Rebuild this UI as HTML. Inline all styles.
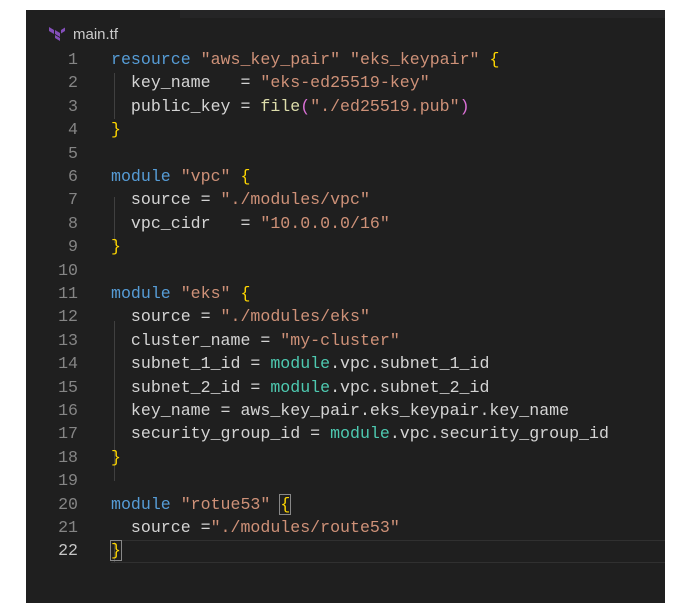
<!DOCTYPE html><html><head><style>
body{margin:0;background:#fff;width:680px;height:611px;position:relative;overflow:hidden}
#p{position:absolute;left:26px;top:10px;width:639px;height:593px;background:#1f1f1f}
#strip{position:absolute;left:154px;top:0;width:485px;height:8px;background:#252526}
#tab{position:absolute;left:47px;top:16px;color:#ccc;font:15px "Liberation Sans",sans-serif}
#code{position:absolute;left:0;top:3px;width:639px;height:580px}
.l{position:absolute;left:0;height:23px;line-height:23px;font:16.6px "Liberation Mono",monospace;white-space:pre;color:#d4d4d4}
.n{position:absolute;left:0;width:52px;text-align:right;color:#858585}
.c{position:absolute;left:85px}
.k{color:#569cd6}.s{color:#ce9178}.y{color:#ffd700}.t{color:#4ec9b0}.f{color:#dcdcaa}.m{color:#da70d6}
.g{position:absolute;left:88px;width:1px;background:#404040}
#cur{position:absolute;left:85px;top:527px;width:554px;height:21px;border-top:1px solid #303030;border-bottom:1px solid #303030}
.bx{outline:1px solid #888}
</style></head><body><div id="p">
<div id="strip"></div>
<div id="tab"><svg width="16" height="14" viewBox="0 0 16 14" style="position:absolute;left:-24px;top:1px"><path d="M0 0L5 3V7L0 4Z M6 3L11 6V10L6 7Z M12 3L16 0.5V4L12 6.5Z M6 8L11 11V14L6 11Z" fill="#844fba"/></svg>main.tf</div>
<div id="code">
<div id="cur"></div>
<div class="g" style="top:60px;height:46px"></div>
<div class="g" style="top:184px;height:46px"></div>
<div class="g" style="top:308px;height:160px"></div>
<div class="g" style="top:529px;height:20px"></div>
<div class="l" style="top:37px"><span class="n">1</span><span class="c"><span class="k">resource</span> <span class="s">"aws_key_pair"</span> <span class="s">"eks_keypair"</span> <span class="y">{</span></span></div>
<div class="l" style="top:60.4px"><span class="n">2</span><span class="c">  key_name   = <span class="s">"eks-ed25519-key"</span></span></div>
<div class="l" style="top:83.8px"><span class="n">3</span><span class="c">  public_key = <span class="f">file</span><span class="m">(</span><span class="s">"./ed25519.pub"</span><span class="m">)</span></span></div>
<div class="l" style="top:107.2px"><span class="n">4</span><span class="c"><span class="y">}</span></span></div>
<div class="l" style="top:130.6px"><span class="n">5</span></div>
<div class="l" style="top:154px"><span class="n">6</span><span class="c"><span class="k">module</span> <span class="s">"vpc"</span> <span class="y">{</span></span></div>
<div class="l" style="top:177.4px"><span class="n">7</span><span class="c">  source = <span class="s">"./modules/vpc"</span></span></div>
<div class="l" style="top:200.8px"><span class="n">8</span><span class="c">  vpc_cidr   = <span class="s">"10.0.0.0/16"</span></span></div>
<div class="l" style="top:224.2px"><span class="n">9</span><span class="c"><span class="y">}</span></span></div>
<div class="l" style="top:247.6px"><span class="n">10</span></div>
<div class="l" style="top:271px"><span class="n">11</span><span class="c"><span class="k">module</span> <span class="s">"eks"</span> <span class="y">{</span></span></div>
<div class="l" style="top:294.4px"><span class="n">12</span><span class="c">  source = <span class="s">"./modules/eks"</span></span></div>
<div class="l" style="top:317.8px"><span class="n">13</span><span class="c">  cluster_name = <span class="s">"my-cluster"</span></span></div>
<div class="l" style="top:341.2px"><span class="n">14</span><span class="c">  subnet_1_id = <span class="t">module</span>.vpc.subnet_1_id</span></div>
<div class="l" style="top:364.6px"><span class="n">15</span><span class="c">  subnet_2_id = <span class="t">module</span>.vpc.subnet_2_id</span></div>
<div class="l" style="top:388px"><span class="n">16</span><span class="c">  key_name = aws_key_pair.eks_keypair.key_name</span></div>
<div class="l" style="top:411.4px"><span class="n">17</span><span class="c">  security_group_id = <span class="t">module</span>.vpc.security_group_id</span></div>
<div class="l" style="top:434.8px"><span class="n">18</span><span class="c"><span class="y">}</span></span></div>
<div class="l" style="top:458.2px"><span class="n">19</span></div>
<div class="l" style="top:481.6px"><span class="n">20</span><span class="c"><span class="k">module</span> <span class="s">"rotue53"</span> <span class="y bx">{</span></span></div>
<div class="l" style="top:505px"><span class="n">21</span><span class="c">  source =<span class="s">"./modules/route53"</span></span></div>
<div class="l" style="top:528.4px"><span class="n" style="color:#c6c6c6">22</span><span class="c"><span class="y bx">}</span></span></div>
</div>
</div></body></html>
